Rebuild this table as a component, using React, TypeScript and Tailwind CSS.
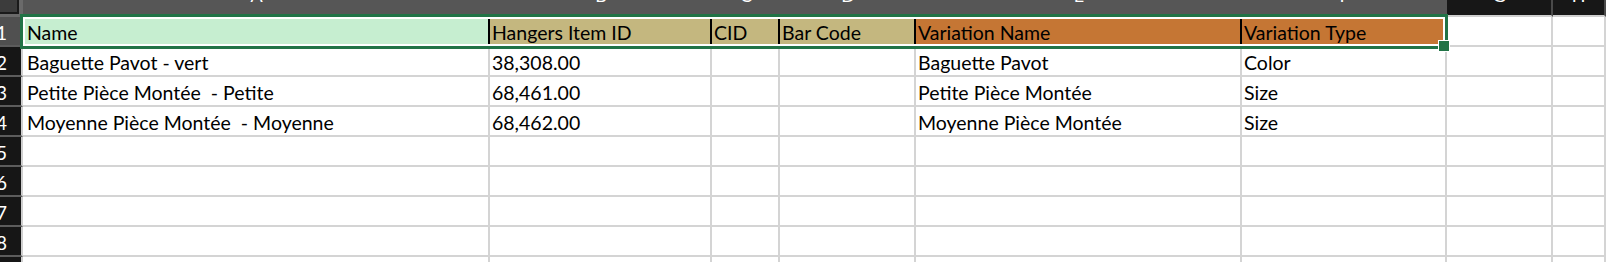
const COLS = [
  { letter: 'A', w: 'w-[467px]', sel: true },
  { letter: 'B', w: 'w-[222px]', sel: true },
  { letter: 'C', w: 'w-[68px]', sel: true },
  { letter: 'D', w: 'w-[136px]', sel: true },
  { letter: 'E', w: 'w-[326px]', sel: true },
  { letter: 'F', w: 'w-[205px]', sel: true },
  { letter: 'G', w: 'w-[106px]', sel: false },
  { letter: 'H', w: 'flex-1', sel: false },
];

const HEADER = [
  { text: 'Name', bg: 'bg-[#c6eed0]' },
  { text: 'Hangers Item ID', bg: 'bg-[#c4b77f]' },
  { text: 'CID', bg: 'bg-[#c4b77f]' },
  { text: 'Bar Code', bg: 'bg-[#c4b77f]' },
  { text: 'Variation Name', bg: 'bg-[#c57634]' },
  { text: 'Variation Type', bg: 'bg-[#c57634]' },
];

const ROWS = [
  ['Baguette Pavot - vert', '38,308.00', '', '', 'Baguette Pavot', 'Color'],
  ['Petite Pièce Montée  - Petite', '68,461.00', '', '', 'Petite Pièce Montée', 'Size'],
  ['Moyenne Pièce Montée  - Moyenne', '68,462.00', '', '', 'Moyenne Pièce Montée', 'Size'],
  [], [], [], [], [],
];

function RowHead({ n, selected }: { n: number; selected?: boolean }) {
  return (
    <div
      className={`w-[23px] shrink-0 h-[30px] flex items-end justify-end pr-[14px] pb-[2px] overflow-hidden border-r-2 border-r-[#cfcfcf] border-b-2 border-b-[#5c5c5c] text-white text-[19px] leading-[20px] ${
        selected ? 'bg-[#505050]' : 'bg-[#161616]'
      }`}
    >
      {n}
    </div>
  );
}

export default function App() {
  return (
    <div className="relative w-[1606px] h-[262px] overflow-hidden bg-white font-['Lato',sans-serif] text-black">
      {/* column headers */}
      <div className="flex h-[17px]">
        <div className="w-[23px] shrink-0 h-[17px] bg-[#6a6a6a]">
          <div className="w-[19px] h-[14px] bg-[#3c3c3c] border-r-2 border-b-2 border-[#1a1a1a]" />
        </div>
        {COLS.map((c) => (
          <div
            key={c.letter}
            className={`${c.w} shrink-0 h-[17px] flex justify-center overflow-hidden border-b-2 ${
              c.sel
                ? 'bg-[#565656] border-b-[#565656]'
                : 'bg-[#171717] border-b-[#cfcfcf] border-r-2 border-r-[#4a4a4a]'
            }`}
          >
            <span className="text-white text-[18px] leading-[18px] -mt-[14px]">{c.letter}</span>
          </div>
        ))}
      </div>

      {/* row 1 */}
      <div className="flex">
        <RowHead n={1} selected />
        {HEADER.map((h, i) => (
          <div
            key={h.text}
            className={`${COLS[i].w} shrink-0 h-[30px] ${h.bg} border-r-2 ${
              i < 5 ? 'border-r-black' : 'border-r-[#d4d4d4]'
            } border-b-2 border-b-[#d4d4d4] flex items-end pb-[2px] ${i === 0 ? 'pl-[4px]' : 'pl-[2px]'} text-[19.5px] leading-[20px] whitespace-pre`}
          >
            {h.text}
          </div>
        ))}
        {COLS.slice(6).map((c) => (
          <div key={c.letter} className={`${c.w} shrink-0 h-[30px] border-r-2 border-b-2 border-[#d4d4d4]`} />
        ))}
      </div>

      {/* data rows */}
      {ROWS.map((r, ri) => (
        <div key={ri} className="flex">
          <RowHead n={ri + 2} />
          {COLS.map((c, ci) => (
            <div
              key={c.letter}
              className={`${c.w} shrink-0 h-[30px] border-r-2 border-b-2 border-[#d4d4d4] flex items-end pb-[2px] ${
                ci === 0 ? 'pl-[4px]' : 'pl-[2px]'
              } text-[19.5px] leading-[20px] whitespace-pre overflow-hidden`}
            >
              {r[ci] ?? ''}
            </div>
          ))}
        </div>
      ))}

      {/* selection outline over A1:F1 */}
      <div className="absolute left-[20px] top-[14px] w-[1428px] h-[35px] border-[3px] border-[#217346] shadow-[inset_0_0_0_2px_white] pointer-events-none" />
      <div className="absolute left-[1438px] top-[40px] w-[12px] h-[12px] bg-[#217346] border border-white" />
    </div>
  );
}
